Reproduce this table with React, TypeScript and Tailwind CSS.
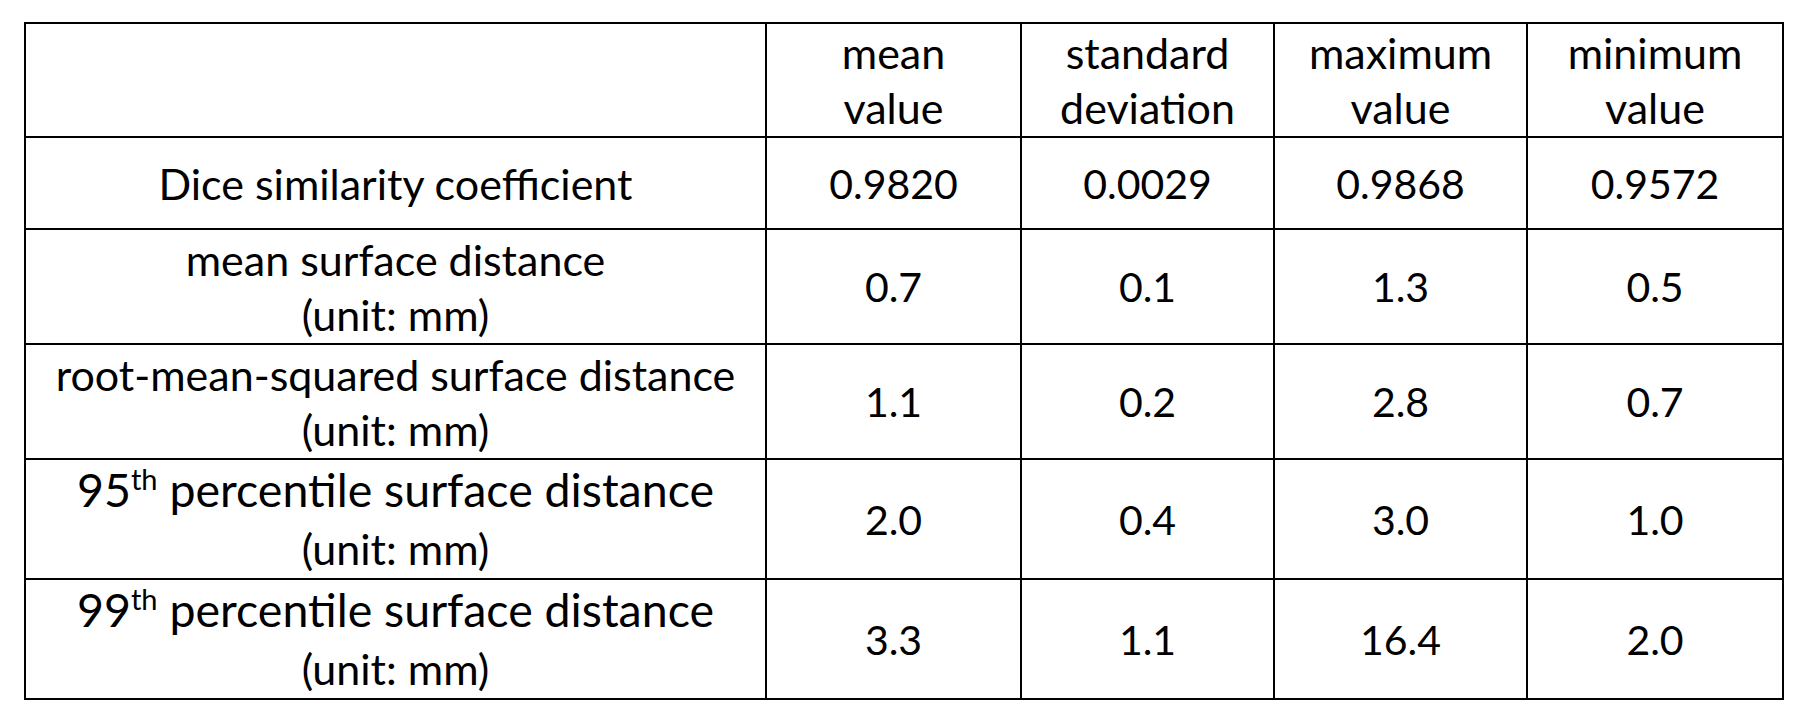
type Row = {
  label: React.ReactNode
  values: string[]
  height: string
}

const unit = <span className="block">(unit: mm)</span>

const percentile = (n: string) => (
  <>
    <span className="block leading-[59px] text-[46.5px]">
      {n}
      <sup className="text-[29px] align-baseline relative -top-[17px]">th</sup> percentile surface distance
    </span>
    <span className="block leading-[59px]">(unit: mm)</span>
  </>
)

const rows: Row[] = [
  {
    label: 'Dice similarity coefficient',
    values: ['0.9820', '0.0029', '0.9868', '0.9572'],
    height: 'h-[92px]',
  },
  {
    label: (
      <>
        <span className="block">mean surface distance</span>
        {unit}
      </>
    ),
    values: ['0.7', '0.1', '1.3', '0.5'],
    height: 'h-[115px]',
  },
  {
    label: (
      <>
        <span className="block">root-mean-squared surface distance</span>
        {unit}
      </>
    ),
    values: ['1.1', '0.2', '2.8', '0.7'],
    height: 'h-[115px]',
  },
  {
    label: percentile('95'),
    values: ['2.0', '0.4', '3.0', '1.0'],
    height: 'h-[120px]',
  },
  {
    label: percentile('99'),
    values: ['3.3', '1.1', '16.4', '2.0'],
    height: 'h-[120px]',
  },
]

const headers = [
  ['mean', 'value'],
  ['standard', 'deviation'],
  ['maximum', 'value'],
  ['minimum', 'value'],
]

export default function App() {
  return (
    <div className="w-[1805px] h-[714px] bg-white overflow-hidden pl-[24px] pt-[22px] font-['Lato',sans-serif] text-black text-[43px] leading-[55px]">
      <table className="table-fixed border-collapse w-[1758px]">
        <colgroup>
          <col className="w-[741px]" />
          <col className="w-[255px]" />
          <col className="w-[253px]" />
          <col className="w-[253px]" />
          <col className="w-[256px]" />
        </colgroup>
        <tbody>
          <tr className="h-[114px]">
            <td className="border-[2.5px] border-black" />
            {headers.map(([a, b]) => (
              <td key={a + b} className="border-[2.5px] border-black text-center align-middle">
                <span className="block">{a}</span>
                <span className="block">{b}</span>
              </td>
            ))}
          </tr>
          {rows.map((row, i) => (
            <tr key={i} className={row.height}>
              <td className="border-[2.5px] border-black text-center align-middle">{row.label}</td>
              {row.values.map((v, j) => (
                <td key={j} className="border-[2.5px] border-black text-center align-middle text-[41px]">
                  {v}
                </td>
              ))}
            </tr>
          ))}
        </tbody>
      </table>
    </div>
  )
}
